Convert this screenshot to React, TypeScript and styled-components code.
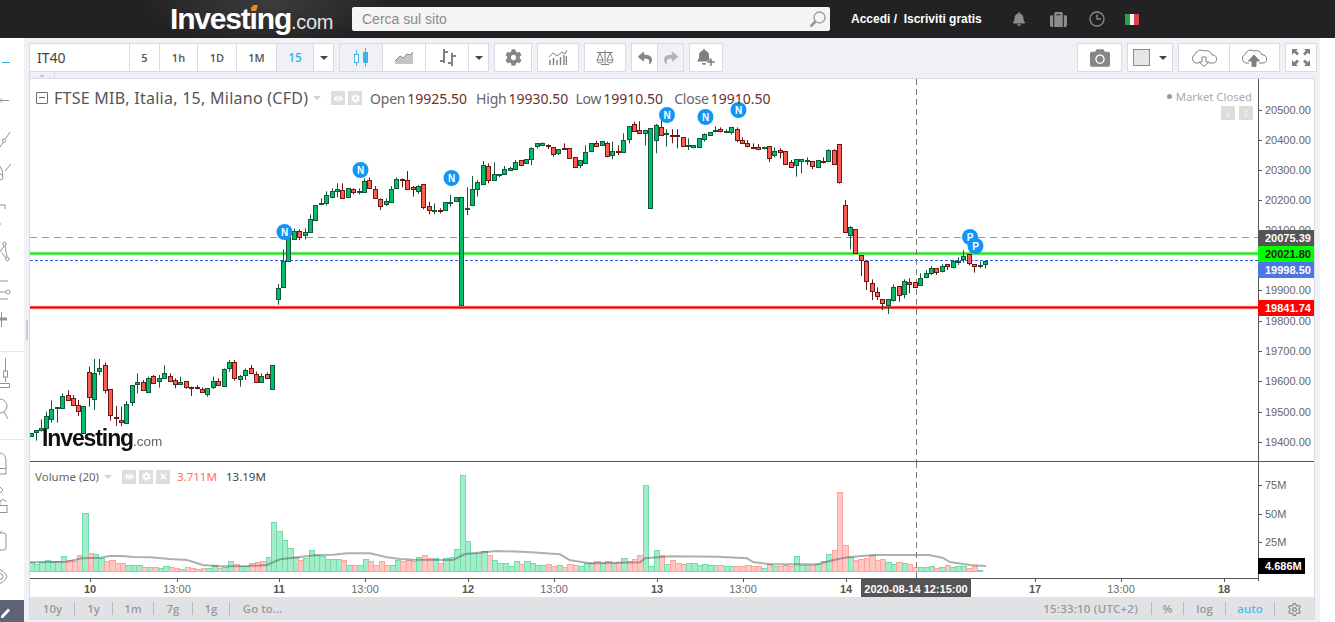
import { FC, ReactNode } from "react";
import styled, { createGlobalStyle } from "styled-components";
import {
  FaBell,
  FaCamera,
  FaCog,
  FaEye,
  FaReply,
  FaShare,
  FaSuitcase,
  FaTimes,
} from "react-icons/fa";
import { Settings } from "lucide-react";

// Candles are noted in thirds of a pixel: [x, wickTop, wickBottom, bodyTop, bodyBottom, up]
type Candle = [number, number, number, number, number, number];

const week: { ox: number; oy: number; rows: Candle[] }[] = [
  {
    ox: 0,
    oy: 340,
    rows: [
      [92, 280, 287, 280, 287, 1], [107, 271, 302, 271, 277, 1], [122, 238, 275, 265, 271, 1], [137, 215, 265, 229, 263, 1],
      [154, 181, 248, 208, 236, 1], [170, 202, 248, 202, 205, 1], [187, 160, 203, 169, 203, 1], [203, 151, 182, 166, 179, 0],
      [218, 165, 194, 175, 194, 0], [235, 180, 228, 196, 214, 0], [250, 199, 278, 199, 278, 1], [268, 80, 200, 97, 172, 0],
      [283, 57, 210, 100, 176, 1], [298, 57, 105, 85, 92, 1], [316, 67, 160, 76, 151, 0], [331, 148, 242, 148, 226, 0],
      [349, 198, 258, 231, 233, 0], [364, 200, 258, 241, 245, 0], [379, 183, 248, 193, 248, 1], [397, 136, 198, 136, 185, 1],
      [412, 100, 160, 127, 131, 1], [430, 120, 152, 127, 151, 0], [445, 110, 155, 115, 155, 1], [460, 105, 130, 109, 128, 0],
      [478, 105, 143, 115, 124, 1], [493, 76, 113, 100, 113, 1], [511, 100, 124, 109, 122, 0], [526, 115, 145, 121, 133, 0],
      [541, 110, 133, 127, 133, 1], [559, 124, 146, 124, 142, 0], [574, 140, 168, 140, 142, 0], [592, 135, 148, 142, 145, 0],
      [607, 142, 157, 148, 157, 0], [622, 145, 170, 145, 161, 1], [640, 110, 147, 124, 142, 1], [655, 115, 138, 124, 136, 0],
      [673, 85, 139, 88, 139, 1], [688, 60, 95, 67, 85, 1], [703, 60, 122, 67, 115, 0], [721, 105, 140, 109, 118, 1],
      [736, 85, 120, 91, 106, 1], [754, 75, 100, 85, 100, 0], [769, 95, 127, 103, 127, 0], [784, 100, 127, 109, 127, 1],
      [802, 97, 115, 103, 115, 0], [817, 76, 148, 76, 148, 1],
    ],
  },
  {
    ox: 260,
    oy: 100,
    rows: [
      [55, 552, 614, 565, 598, 1], [70, 448, 562, 484, 562, 1], [85, 412, 482, 412, 482, 1], [103, 385, 420, 394, 418, 1],
      [118, 388, 420, 394, 412, 0], [136, 385, 418, 397, 406, 1], [151, 343, 397, 358, 397, 1], [166, 316, 361, 316, 361, 1],
      [184, 295, 316, 310, 313, 1], [199, 274, 316, 286, 310, 1], [217, 265, 295, 274, 292, 1], [232, 250, 292, 268, 274, 1],
      [247, 250, 295, 271, 295, 0], [265, 265, 292, 265, 292, 1], [280, 265, 283, 268, 277, 0], [298, 265, 283, 274, 277, 1],
      [313, 235, 277, 244, 277, 1], [328, 232, 265, 241, 265, 0], [346, 258, 295, 268, 295, 0], [361, 295, 330, 298, 319, 0],
      [379, 295, 318, 304, 313, 1], [394, 258, 307, 268, 307, 1], [409, 232, 265, 238, 265, 1], [427, 235, 262, 238, 241, 0],
      [442, 213, 268, 241, 268, 0], [460, 258, 290, 262, 268, 0], [475, 255, 282, 259, 274, 1], [490, 253, 328, 253, 322, 0],
      [508, 305, 343, 319, 331, 0], [523, 310, 343, 331, 334, 1], [541, 325, 340, 331, 333, 0], [556, 307, 331, 307, 331, 1],
      [571, 285, 320, 307, 310, 1], [589, 292, 304, 292, 304, 1], [604, 292, 616, 292, 616, 1], [622, 262, 345, 325, 328, 1],
      [637, 228, 316, 268, 316, 1], [652, 240, 290, 247, 268, 1], [670, 183, 256, 196, 253, 1], [685, 190, 250, 199, 241, 0],
      [703, 187, 241, 223, 241, 1], [718, 222, 232, 223, 226, 1], [733, 198, 223, 208, 223, 1], [751, 200, 212, 205, 211, 1],
      [766, 180, 210, 187, 208, 1], [784, 181, 196, 181, 196, 0], [799, 178, 192, 178, 190, 1], [814, 142, 195, 145, 178, 1],
      [832, 130, 145, 130, 139, 1],
    ],
  },
  {
    ox: 540,
    oy: 100,
    rows: [
      [7, 127, 136, 130, 136, 1], [25, 133, 147, 136, 139, 0], [40, 142, 170, 142, 163, 0], [55, 147, 165, 148, 160, 1],
      [73, 130, 150, 145, 148, 0], [88, 145, 175, 145, 175, 0], [106, 172, 202, 172, 202, 0], [121, 181, 205, 181, 196, 1],
      [136, 136, 190, 157, 190, 1], [154, 130, 154, 130, 154, 1], [169, 122, 139, 130, 139, 0], [187, 124, 136, 124, 136, 1],
      [202, 125, 172, 130, 169, 0], [217, 125, 178, 154, 166, 1], [235, 136, 165, 154, 157, 0], [250, 100, 157, 121, 157, 1],
      [268, 79, 130, 79, 118, 1], [283, 65, 94, 73, 94, 0], [298, 64, 100, 91, 100, 0], [316, 91, 136, 91, 100, 1],
      [331, 85, 325, 85, 325, 1], [349, 72, 160, 76, 121, 1], [364, 60, 106, 82, 106, 0], [379, 88, 140, 100, 103, 1],
      [397, 88, 130, 106, 108, 0], [412, 88, 145, 106, 107, 0], [430, 112, 139, 112, 139, 0], [445, 115, 150, 136, 139, 1],
      [460, 136, 145, 136, 142, 1], [478, 115, 142, 115, 142, 1], [493, 100, 125, 103, 118, 1], [511, 97, 108, 97, 106, 1],
      [526, 79, 97, 91, 92, 1], [541, 82, 97, 88, 94, 0], [559, 88, 100, 93, 94, 1], [574, 82, 104, 82, 97, 1],
      [592, 82, 127, 88, 121, 0], [607, 112, 130, 121, 130, 0], [622, 120, 142, 130, 139, 0], [640, 130, 148, 142, 145, 0],
      [655, 132, 150, 142, 148, 0], [673, 140, 148, 142, 144, 1], [688, 139, 186, 139, 175, 0], [703, 142, 172, 154, 166, 1],
      [721, 145, 175, 151, 157, 0], [736, 154, 193, 154, 193, 0], [754, 180, 203, 187, 202, 0], [769, 178, 230, 178, 196, 1],
      [784, 178, 220, 178, 184, 1], [802, 172, 195, 181, 184, 1], [817, 184, 207, 184, 199, 0], [835, 181, 202, 181, 202, 1],
      [850, 172, 190, 184, 187, 0], [865, 148, 184, 151, 184, 1], [883, 148, 193, 151, 193, 0], [898, 133, 251, 133, 247, 0],
    ],
  },
  {
    ox: 820,
    oy: 190,
    rows: [
      [76, 30, 127, 46, 127, 0], [91, 108, 178, 112, 136, 1], [106, 118, 190, 118, 190, 0], [124, 196, 258, 196, 211, 0],
      [139, 214, 300, 214, 274, 0], [157, 268, 330, 280, 304, 0], [172, 292, 330, 307, 319, 0], [187, 328, 360, 328, 340, 0],
      [205, 328, 372, 328, 346, 1], [220, 283, 335, 292, 331, 1], [238, 289, 335, 289, 316, 0], [253, 268, 325, 274, 313, 1],
      [268, 265, 310, 277, 283, 0], [286, 277, 292, 277, 292, 0], [301, 250, 288, 265, 286, 1], [319, 240, 265, 250, 262, 1],
      [334, 228, 255, 235, 250, 1], [349, 235, 255, 235, 247, 0], [367, 222, 247, 229, 244, 1], [382, 222, 240, 223, 229, 0],
      [400, 210, 235, 214, 232, 1], [415, 202, 225, 212, 214, 1], [430, 181, 218, 199, 208, 1], [448, 193, 226, 193, 220, 0],
      [463, 223, 248, 223, 229, 0], [481, 214, 235, 226, 229, 1], [496, 212, 236, 212, 223, 1],
    ],
  },
];

// Volume bar tops in thirds of a pixel, negative for a falling bar
const volumeTops = [
  306, 312, 305, 300, 304, 302, 289, -300, -302, -286, 160, -280, 283, 295, -302, -300, -309, -309, 316, 316, 316, -321, 321, -321, 325, 319, -321, -323,
  327, -321, -323, -326, -323, 323, 316, -323, 321, 304, -312, 318, 318, -309, -306, -304, 291, 187, 214, 240, 265, 291, -300, 295, 270, 284, 287, 297,
  297, 297, -300, 316, -316, 316, 298, -304, -316, -304, -316, 314, 300,
  -302, -300, -302, 292, -286, -295, 295, -310, 295, 292, 268, 46, 244, 280, 280, 274, -286, 301, 310, 310, 319, 304, -313, 304, 310, 316, 316, -313,
  -319, 316, -322, -313, -316, 319, 310, 310, -304, 310, -304, 310, -307, 295, -304, -298, -286, 76, 319, 271, -286, 313, -301, -310, -313, 310, 310, 316,
  313, 316, 316, -316, 319, 319, -319, -319, -316, -319, -319, 325, -313, 319, -319, -316, -319, 289, 316, 316, -316, 313, -304, 283, -271, -97, -256,
  292, -301, -298, -295, -286, -301, -298, 307, 313, -307, 310, -313, -322, 322, 322, 319, -325, 322, -316, 322, 319, 319, -325, -319, 330,
];

const averagePath =
  "M30 562.300 L67 561.700 L82 558.300 L100 557.700 L110 556 L123 556 L133 557 L150 557.300 L170 559 L187 560 L203 565 L220 566.300 L247 566 L267 565 L280 559.300 L300 557 L317 555 L333 554.700 L347 553.300 L370 553.300 L387 557.300 L400 559 L413 559.700 L453 560 L465 554 L483 552.300 L497 551 L527 552 L560 554.300 L570 560.300 L590 563.300 L640 562.300 L645 558.300 L670 556.300 L717 556.700 L747 558.300 L753 562 L770 564.300 L817 564.300 L837 559.300 L849 557 L875 555 L929 555 L943 558 L950 562 L970 565 L986 566";

const priceTicks = [
  [110, "20500.00"], [140, "20400.00"], [170, "20300.00"], [200, "20200.00"], [230, "20100.00"], [290, "19900.00"],
  [321, "19800.00"], [351, "19700.00"], [381, "19600.00"], [412, "19500.00"], [442, "19400.00"],
] as const;

const priceBadges = [
  { y: 230, text: "20075.39", bg: "#555555", fg: "#ffffff" },
  { y: 246, text: "20021.80", bg: "#00ff00", fg: "#222222" },
  { y: 262, text: "19998.50", bg: "#4f74e3", fg: "#ffffff" },
  { y: 300, text: "19841.74", bg: "#ff0000", fg: "#ffffff" },
];

const newsMarks = [
  [360.5, 170, "N"], [284.5, 232, "N"], [451.5, 178, "N"], [667, 115, "N"], [705.5, 117, "N"], [738.5, 110, "N"], [970, 237, "P"], [975.5, 246, "P"],
] as const;

const timeTicks = [
  [90, "10", true], [177, "13:00", false], [279, "11", true], [365, "13:00", false], [468, "12", true], [554, "13:00", false],
  [657, "13", true], [743, "13:00", false], [846, "14", true], [1035, "17", true], [1121, "13:00", false], [1224, "18", true],
] as const;

const GlobalStyle = createGlobalStyle`
  html, body {
    margin: 0;
    height: 622px;
    overflow: hidden;
    background: #ffffff;
    font-family: "Liberation Sans", Arial, sans-serif;
  }
`;

const Page = styled.div`
  display: flex;
  flex-direction: column;
  width: 1335px;
  height: 622px;
  overflow: hidden;
`;

const Header = styled.header`
  display: flex;
  align-items: center;
  flex: 0 0 38px;
  padding-left: 170px;
  background: radial-gradient(ellipse 130px 40px at 270px 4px, #3c3c3c, #222222 100%);
`;

const Logo = styled.div`
  position: relative;
  flex: 0 0 182px;
  display: flex;
  align-items: baseline;
  height: 38px;
  line-height: 38px;
  color: #ffffff;
  font-size: 30px;
  font-weight: 700;
  letter-spacing: -1.18px;
`;

const LogoSuffix = styled.span`
  font-size: 20px;
  font-weight: 400;
  letter-spacing: -0.3px;
  color: #e4e4e4;
`;

const LogoTick = styled.i`
  position: absolute;
  left: 82px;
  top: 5px;
  width: 5px;
  height: 6px;
  background: #f08a1c;
  transform: skewX(-16deg);
`;

const Search = styled.div`
  display: flex;
  align-items: center;
  flex: 0 0 478px;
  height: 24px;
  box-sizing: border-box;
  padding: 0 4px 0 10px;
  border-radius: 2px;
  background: #f5f5f5;
`;

const SearchInput = styled.input`
  flex: 1;
  min-width: 0;
  border: 0;
  outline: 0;
  padding: 0;
  background: transparent;
  font: 14px "Liberation Sans", Arial, sans-serif;
  &::placeholder {
    color: #8a8a8a;
    opacity: 1;
  }
`;

const Login = styled.div`
  margin-left: 21px;
  flex: 0 0 161px;
  color: #ffffff;
  font-size: 12px;
  font-weight: 700;
  white-space: pre;
`;

const HeaderIcon = styled.div<{ $w: number }>`
  flex: 0 0 ${(p) => p.$w}px;
  display: flex;
  align-items: center;
  color: #8c8c8c;
`;

const Flag = styled.div`
  display: flex;
  width: 14px;
  height: 11px;
`;

const FlagStripe = styled.i<{ $c: string }>`
  flex: 1;
  background: ${(p) => p.$c};
`;

const Body = styled.div`
  flex: 1;
  display: flex;
  min-height: 0;
`;

const Sidebar = styled.aside`
  flex: 0 0 24px;
  display: flex;
  flex-direction: column;
  overflow: hidden;
  background: #ffffff;
`;

const ToolSection = styled.div<{ $top: number; $last?: boolean }>`
  padding: ${(p) => p.$top}px 0 ${(p) => (p.$last ? 0 : 8)}px;
  border-bottom: ${(p) => (p.$last ? "0" : "1px solid #dfe9f0")};
`;

const ToolIcon = styled.svg`
  display: block;
  width: 24px;
  height: 37.5px;
  overflow: hidden;
  fill: none;
  stroke: #8796a4;
  stroke-width: 1;
`;

const PencilButton = styled.div`
  margin-top: auto;
  height: 22px;
  background: #5d6274;
`;

const Main = styled.main`
  position: relative;
  flex: 0 0 1296px;
  display: flex;
  flex-direction: column;
  box-sizing: border-box;
  padding: 5px 5px 0;
  background: #eff1f6;
`;

const Splitter = styled.i`
  position: absolute;
  left: 2px;
  top: 282px;
  width: 2px;
  height: 20px;
  border-radius: 2px;
  background: #c9ccd3;
`;

const Toolbar = styled.div`
  display: flex;
  flex: 0 0 29px;
  gap: 5px;
  margin-right: -2px;
`;

const Group = styled.div<{ $push?: boolean }>`
  display: flex;
  box-sizing: border-box;
  border: 1px solid #d8dbe0;
  background: #ffffff;
  margin-left: ${(p) => (p.$push ? "auto" : "0")};
`;

const SymbolName = styled.div`
  width: 99px;
  padding-left: 7px;
  box-sizing: border-box;
  line-height: 27px;
  font-size: 14px;
  color: #444444;
  font-family: "Noto Sans", sans-serif;
`;

const ToolButton = styled.div<{ $w: number; $on?: boolean; $tone?: string }>`
  flex: 0 0 ${(p) => p.$w}px;
  display: flex;
  align-items: center;
  justify-content: center;
  gap: 9px;
  box-sizing: border-box;
  border-left: 1px solid #d8dbe0;
  background: ${(p) => (p.$on ? "#f0f1f5" : "#ffffff")};
  color: ${(p) => p.$tone ?? "#868686"};
  font-size: 11px;
  font-weight: 700;
  &:first-child {
    border-left: 0;
  }
`;

const IntervalLabel = styled.span<{ $on?: boolean }>`
  color: ${(p) => (p.$on ? "#3fb3e6" : "#555555")};
  font-family: "Open Sans", sans-serif;
  font-size: ${(p) => (p.$on ? 12 : 11)}px;
  font-weight: 600;
`;

const Caret = styled.i`
  width: 0;
  height: 0;
  border-left: 4px solid transparent;
  border-right: 4px solid transparent;
  border-top: 4px solid #444444;
`;

const ColorSwatch = styled.i`
  width: 17px;
  height: 17px;
  box-sizing: border-box;
  border: 1px solid #8a8a8a;
  background: #e6e6e6;
`;

const HideStrip = styled.div`
  flex: 0 0 6px;
  display: flex;
`;

const HideTab = styled.div`
  width: 26px;
  box-sizing: border-box;
  border-right: 1px solid #d8dbe0;
  border-left: 1px solid #d8dbe0;
  display: flex;
  justify-content: center;
  align-items: center;
  &::after {
    content: "";
    border-left: 3px solid transparent;
    border-right: 3px solid transparent;
    border-bottom: 3px solid #c0c3c8;
  }
`;

const Frame = styled.div`
  display: flex;
  flex-direction: column;
  width: 1286px;
  height: 542px;
  box-sizing: border-box;
  border: 1px solid #d8dbe0;
  background: #ffffff;
`;

const Pane = styled.section<{ $h: number; $rule?: boolean }>`
  position: relative;
  flex: 0 0 ${(p) => p.$h}px;
  box-sizing: border-box;
  height: ${(p) => p.$h}px;
  border-top: ${(p) => (p.$rule ? "1px solid #555555" : "0")};
`;

const Canvas = styled.svg`
  display: block;
  width: 100%;
  height: 100%;
`;

const PriceText = styled.text`
  font: 11px "Liberation Sans", Arial, sans-serif;
  fill: #666666;
`;

const BadgeText = styled.text`
  font: 700 11px "Liberation Sans", Arial, sans-serif;
`;

const MarkText = styled.text`
  font: 700 10px "Liberation Sans", Arial, sans-serif;
  fill: #ffffff;
  text-anchor: middle;
`;

const TimeText = styled.text<{ $day?: boolean }>`
  font: ${(p) => (p.$day ? 700 : 400)} 11px "Liberation Sans", Arial, sans-serif;
  fill: ${(p) => (p.$day ? "#555555" : "#6c6c6c")};
  text-anchor: middle;
`;

const Legend = styled.div`
  position: absolute;
  left: 6px;
  top: 8px;
  display: flex;
  align-items: center;
  font-family: "Noto Sans", sans-serif;
  white-space: nowrap;
`;

const Collapse = styled.i`
  position: relative;
  width: 10px;
  height: 10px;
  border: 1px solid #6b6b6b;
  border-radius: 1px;
  margin-right: 6px;
  &::after {
    content: "";
    position: absolute;
    left: 2px;
    right: 2px;
    top: 4px;
    height: 1px;
    background: #6b6b6b;
  }
`;

const LegendTitle = styled.span`
  width: 254px;
  font-size: 16px;
  letter-spacing: 0.26px;
  color: #555555;
`;

const SoftCaret = styled.i`
  width: 0;
  height: 0;
  margin-left: 5px;
  border-left: 4px solid transparent;
  border-right: 4px solid transparent;
  border-top: 4px solid #d0d0d0;
`;

const PaneButton = styled.span<{ $gap?: number }>`
  display: flex;
  align-items: center;
  justify-content: center;
  width: 14px;
  height: 14px;
  margin-left: ${(p) => p.$gap ?? 3}px;
  background: #dddddd;
  color: #ffffff;
  font-size: 9px;
`;

const QuoteLabel = styled.span<{ $gap: number }>`
  margin-left: ${(p) => p.$gap}px;
  font-size: 14px;
  letter-spacing: -0.2px;
  color: #666666;
`;

const QuoteValue = styled.span`
  margin-left: 2px;
  font-size: 14px;
  color: #6d2f2f;
`;

const MarketState = styled.div`
  position: absolute;
  right: 62px;
  top: 10px;
  display: flex;
  align-items: center;
  gap: 4px;
  font-family: "Noto Sans", sans-serif;
  font-size: 11.3px;
  color: #aaaaaa;
`;

const StateDot = styled.i`
  width: 5px;
  height: 5px;
  border-radius: 50%;
  background: #999999;
`;

const ScaleButtons = styled.div`
  position: absolute;
  right: 61px;
  top: 27px;
  display: flex;
  gap: 4px;
`;

const ScaleButton = styled.span`
  width: 14px;
  height: 14px;
  background: #dddddd;
  color: #ffffff;
  font-size: 11px;
  line-height: 13px;
  font-weight: 700;
  text-align: center;
`;

const Watermark = styled.div`
  position: absolute;
  left: 12px;
  top: 344px;
  display: flex;
  align-items: baseline;
  font-size: 23px;
  line-height: 30px;
  font-weight: 700;
  letter-spacing: -1.1px;
  color: #111111;
  filter: blur(0.4px);
`;

const WatermarkSuffix = styled.span`
  font-size: 13.5px;
  font-weight: 400;
  letter-spacing: 0;
  color: #666666;
`;

const VolumeLegend = styled.div`
  position: absolute;
  left: 5px;
  top: 7px;
  display: flex;
  align-items: center;
  font-family: "Noto Sans", sans-serif;
  font-size: 11.5px;
  color: #666666;
  white-space: nowrap;
`;

const VolumeValue = styled.span<{ $c: string; $w: number; $gap?: number }>`
  flex: 0 0 ${(p) => p.$w}px;
  margin-left: ${(p) => p.$gap ?? 0}px;
  color: ${(p) => p.$c};
`;

const BottomBar = styled.footer`
  flex: 0 0 22px;
  display: flex;
  align-items: center;
  padding-left: 1px;
  background: #e1e2e5;
  font-family: "Open Sans", sans-serif;
  font-size: 11.5px;
  font-weight: 600;
  color: #9a9a9a;
`;

const BarItem = styled.div<{ $w: number; $c?: string; $end?: boolean }>`
  flex: 0 0 ${(p) => p.$w}px;
  box-sizing: border-box;
  height: 13px;
  line-height: 13px;
  text-align: center;
  color: ${(p) => p.$c ?? "#9a9a9a"};
  border-right: ${(p) => (p.$end ? "0" : "1px solid #b9babd")};
`;

const ClockItem = styled(BarItem)`
  padding-right: 13px;
  text-align: right;
  white-space: nowrap;
  direction: rtl;
  unicode-bidi: plaintext;
  letter-spacing: 0.2px;
`;

const BarSpacer = styled.div`
  flex: 1;
`;

const CandleMark: FC<{ c: Candle; ox: number; oy: number }> = ({ c, ox, oy }) => {
  const [zx, wickTop, wickBottom, bodyTop, bodyBottom, up] = c;
  const x = Math.round(ox + zx / 3) + 0.5;
  const top = Math.round(oy + bodyTop / 3) + 0.5;
  const bottom = Math.max(Math.round(oy + bodyBottom / 3) + 0.5, top + 1);
  const edge = up ? "#14573b" : "#6e1813";
  return (
    <g stroke={edge} strokeWidth={1}>
      <line x1={x} x2={x} y1={oy + wickTop / 3} y2={oy + wickBottom / 3} />
      <rect x={x - 2} y={top} width={4} height={bottom - top} fill={up ? "#00bd6b" : "#fc5b50"} />
    </g>
  );
};

const Crosshair: FC<{ y1: number; y2: number }> = ({ y1, y2 }) => (
  <line x1={916.5} x2={916.5} y1={y1} y2={y2} stroke="#777777" strokeDasharray="6 4" />
);

const PriceChart = () => (
  <Canvas viewBox="30 79 1284 382">
    <line x1={30} x2={1258} y1={237.5} y2={237.5} stroke="#999999" strokeDasharray="7 5" />
    <line x1={30} x2={1258} y1={253.5} y2={253.5} stroke="#9df59d" strokeWidth={3.4} />
    <line x1={30} x2={1258} y1={253.5} y2={253.5} stroke="#1fe61f" strokeWidth={1.8} />
    <line x1={30} x2={1258} y1={260.5} y2={260.5} stroke="#2b5ce6" strokeDasharray="3 2" />
    <line x1={30} x2={1258} y1={307.5} y2={307.5} stroke="#ffa0a0" strokeWidth={3.4} />
    <line x1={30} x2={1258} y1={307.5} y2={307.5} stroke="#f20000" strokeWidth={1.8} />
    <Crosshair y1={79} y2={461} />
    {week.map((part) =>
      part.rows.map((c) => <CandleMark key={`${part.ox}-${c[0]}`} c={c} ox={part.ox} oy={part.oy} />),
    )}
    {newsMarks.map(([x, y, letter]) => (
      <g key={`${x}-${y}`}>
        <circle cx={x} cy={y} r={8} fill="#1296f3" />
        <MarkText x={x} y={y + 3.5}>
          {letter}
        </MarkText>
      </g>
    ))}
    <line x1={1258.5} x2={1258.5} y1={79} y2={461} stroke="#555555" />
    {priceTicks.map(([y, label]) => (
      <g key={label}>
        <line x1={1258} x2={1262} y1={y + 0.5} y2={y + 0.5} stroke="#555555" />
        <PriceText x={1265} y={y + 4}>
          {label}
        </PriceText>
      </g>
    ))}
    {priceBadges.map((b) => (
      <g key={b.text}>
        <rect x={1258} y={b.y} width={57} height={16} fill={b.bg} />
        <BadgeText x={1265} y={b.y + 12} fill={b.fg}>
          {b.text}
        </BadgeText>
      </g>
    ))}
  </Canvas>
);

const VolumeChart = () => {
  const step = 5.39;
  return (
    <Canvas viewBox="30 462 1284 116">
      {volumeTops.map((t, i) => {
        const left = Math.round(28.4 + i * step);
        const next = Math.round(28.4 + (i + 1) * step);
        const top = 460 + Math.abs(t) / 3;
        return (
          <rect
            key={i}
            x={left + 0.5}
            y={Math.round(top) + 0.5}
            width={next - left}
            height={571 - Math.round(top)}
            fill={t > 0 ? "#a4edcb" : "#ffc8c4"}
            stroke={t > 0 ? "#6fdcab" : "#ffa39c"}
          />
        );
      })}
      <path d={averagePath} fill="none" stroke="#4e4e4e" strokeOpacity={0.45} strokeWidth={2} />
      <Crosshair y1={462} y2={578} />
      <line x1={1258.5} x2={1258.5} y1={462} y2={578} stroke="#555555" />
      {[[485, "75M"], [514, "50M"], [542, "25M"]].map(([y, label]) => (
        <g key={label}>
          <line x1={1258} x2={1262} y1={Number(y) + 0.5} y2={Number(y) + 0.5} stroke="#555555" />
          <PriceText x={1265} y={Number(y) + 4}>
            {label}
          </PriceText>
        </g>
      ))}
      <rect x={1258} y={558} width={47} height={16} fill="#000000" />
      <BadgeText x={1265} y={570} fill="#ffffff">
        4.686M
      </BadgeText>
    </Canvas>
  );
};

const TimeAxis = () => (
  <Canvas viewBox="30 578 1284 19">
    <line x1={30} x2={1258} y1={578.5} y2={578.5} stroke="#555555" />
    <line x1={1258.5} x2={1258.5} y1={578} y2={581} stroke="#555555" />
    {timeTicks.map(([x, label, day]) => (
      <g key={x}>
        <line x1={x + 0.5} x2={x + 0.5} y1={578} y2={582} stroke="#555555" />
        <TimeText x={x} y={593} $day={day}>
          {label}
        </TimeText>
      </g>
    ))}
    <rect x={861} y={578} width={110} height={19} fill="#555555" />
    <BadgeText x={916} y={593} fill="#ffffff" textAnchor="middle">
      2020-08-14 12:15:00
    </BadgeText>
  </Canvas>
);

const Tool: FC<{ children: ReactNode }> = ({ children }) => (
  <ToolIcon viewBox="0 0 24 37.5">{children}</ToolIcon>
);

const LeftTools = () => (
  <Sidebar>
    <ToolSection $top={5}>
      <Tool>
        <path d="M2 19.5H10" stroke="#3fb3e6" />
      </Tool>
      <Tool>
        <path d="M0 19.5H9M2 17.5L0 19.5L2 21.5" />
      </Tool>
      <Tool>
        <path d="M10 14L5.5 21M3 24.5L0 29" />
        <circle cx={4} cy={22.5} r={1.6} />
      </Tool>
      <Tool>
        <path d="M11 8L5 15M-1 9Q3 14 3 19" />
        <circle cx={0} cy={21} r={3} />
      </Tool>
      <Tool>
        <path d="M0 12H5V16M0 31H1" />
      </Tool>
      <Tool>
        <path d="M4 15L0 21M5 15L7 26M2 22L6 27" />
        <circle cx={4.5} cy={13} r={1.7} />
        <circle cx={7.5} cy={28} r={1.7} />
      </Tool>
      <Tool>
        <path d="M0 13H8M0 24H6M0 31H8" />
        <circle cx={8} cy={24} r={2} />
      </Tool>
      <Tool>
        <path d="M0 13H7" strokeWidth={3} />
        <path d="M1.5 6V21" />
      </Tool>
    </ToolSection>
    <ToolSection $top={4}>
      <Tool>
        <path d="M5.5 2V15M5.5 21V26M0 27.5H9.5V31.5H0" />
        <rect x={3.5} y={15} width={4} height={6} />
      </Tool>
      <Tool>
        <circle cx={0} cy={12} r={7} />
        <path d="M4 18L8 25" />
      </Tool>
    </ToolSection>
    <ToolSection $top={5} $last>
      <Tool>
        <path d="M0 8Q6 9 6 16V29H0M0 23.5H6" />
      </Tool>
      <Tool>
        <path d="M0 4L3 7L0 10M0 22V18Q3 15 6 18V19" />
        <rect x={-1} y={22.5} width={8} height={7} />
      </Tool>
      <Tool>
        <rect x={-2} y={13} width={8} height={17} rx={2} />
        <path d="M0 13L2 10.5" />
      </Tool>
      <Tool>
        <path d="M-2 11Q4 12 7 18.5Q4 25 -2 26" />
        <circle cx={0} cy={18.5} r={3} />
      </Tool>
    </ToolSection>
    <PencilButton>
      <svg width={24} height={22} viewBox="0 0 24 22">
        <path d="M1 16L8 8.5L10 10.5L3 18L1 18Z" fill="#ffffff" />
      </svg>
    </PencilButton>
  </Sidebar>
);

const TopToolbar = () => (
  <Toolbar>
    <Group>
      <SymbolName>IT40</SymbolName>
      {[["5", 30], ["1h", 38], ["1D", 39], ["1M", 40]].map(([label, w]) => (
        <ToolButton key={label} $w={Number(w)}>
          <IntervalLabel>{label}</IntervalLabel>
        </ToolButton>
      ))}
      <ToolButton $w={37} $on>
        <IntervalLabel $on>15</IntervalLabel>
      </ToolButton>
      <ToolButton $w={20}>
        <Caret />
      </ToolButton>
    </Group>
    <Group>
      <ToolButton $w={42} $on>
        <svg width={16} height={20} viewBox="0 0 16 20" fill="none" stroke="#3fb3e6">
          <path d="M3.5 2V18M12.5 0V19" />
          <rect x={1.5} y={6.5} width={4} height={8} fill="#ffffff" />
          <rect x={10.5} y={4.5} width={4} height={10} fill="#3fb3e6" />
        </svg>
      </ToolButton>
      <ToolButton $w={43}>
        <svg width={18} height={12} viewBox="0 0 18 12">
          <path d="M0 11V9L5 4L8 6L12 2L15 3L18 0V12H0Z" fill="#c4c4c4" />
          <path d="M0 9L5 4L8 6L12 2L15 3L18 0" fill="none" stroke="#8a8a8a" />
        </svg>
      </ToolButton>
      <ToolButton $w={43}>
        <svg width={17} height={19} viewBox="0 0 17 19" fill="none" stroke="#808080" strokeWidth={2}>
          <path d="M5 1V15M5 4H9M5 13H1M13 5V18M13 8H17M13 15H9" />
        </svg>
      </ToolButton>
      <ToolButton $w={20}>
        <Caret />
      </ToolButton>
    </Group>
    <Group>
      <ToolButton $w={36}>
        <FaCog size={17} />
      </ToolButton>
    </Group>
    <Group>
      <ToolButton $w={40}>
        <svg width={18} height={15} viewBox="0 0 18 15" fill="none" stroke="#808080">
          <path d="M1 15V10M4.5 15V8M8 15V10M11.5 15V7M15 15V5M17.500 15V6" strokeWidth={1.4} />
          <path d="M0 7L4 3L8 6L13 2L16 4L18 0" />
        </svg>
      </ToolButton>
    </Group>
    <Group>
      <ToolButton $w={40}>
        <svg width={18} height={15} viewBox="0 0 18 15" fill="none" stroke="#808080">
          <path d="M1 2.500H17M9 0V14M5 14.500H13" />
          <path d="M4 3L1 10H7ZM14 3L11 10H17Z" />
          <path d="M1 10A3 3 0 0 0 7 10M11 10A3 3 0 0 0 17 10" />
        </svg>
      </ToolButton>
    </Group>
    <Group>
      <ToolButton $w={25}>
        <FaReply size={14} />
      </ToolButton>
      <ToolButton $w={26} $on $tone="#b4b4b4">
        <FaShare size={14} />
      </ToolButton>
    </Group>
    <Group>
      <ToolButton $w={32}>
        <svg width={18} height={17} viewBox="0 0 18 17" fill="#808080">
          <path d="M7 0A1 1 0 0 1 8 1.500C11 2 12 4 12 7V9L14 12.500H0L2 9V7C2 4 3 2 6 1.500A1 1 0 0 1 7 0ZM5 14H9A2 2 0 0 1 5 14Z" />
          <path d="M13 9.500H15V12H18V14H15V17H13V14H10V12H13Z" stroke="#ffffff" strokeWidth={0.4} />
        </svg>
      </ToolButton>
    </Group>
    <Group $push>
      <ToolButton $w={43}>
        <FaCamera size={20} />
      </ToolButton>
    </Group>
    <Group>
      <ToolButton $w={44}>
        <ColorSwatch />
        <Caret />
      </ToolButton>
    </Group>
    <Group>
      <ToolButton $w={50}>
        <svg width={27} height={19} viewBox="0 0 27 19" fill="none" stroke="#808080">
          <path d="M8 15H5A4.500 4.500 0 0 1 4 6.500A6 6 0 0 1 13 3A6 6 0 0 1 21 7A4 4 0 0 1 22 15H18" />
          <path d="M11 9H15V14H18L13 18.500L8 14H11Z" fill="#ffffff" />
        </svg>
      </ToolButton>
      <ToolButton $w={50}>
        <svg width={27} height={19} viewBox="0 0 27 19" fill="none" stroke="#808080">
          <path d="M8 15H5A4.500 4.500 0 0 1 4 6.500A6 6 0 0 1 13 3A6 6 0 0 1 21 7A4 4 0 0 1 22 15H18" />
          <path d="M11 18.500H15V13H18.500L13 7L7.500 13H11Z" fill="#808080" />
        </svg>
      </ToolButton>
    </Group>
    <Group>
      <ToolButton $w={30}>
        <svg width={18} height={17} viewBox="0 0 18 17" fill="#808080">
          <path d="M0 0H6L4.200 1.800L7 4.600L5 6.600L2.200 3.800L0 6ZM18 0V6L15.800 3.800L13 6.600L11 4.600L13.800 1.800L12 0ZM0 17V11L2.200 13.200L5 10.400L7 12.400L4.200 15.200L6 17ZM18 17H12L13.800 15.200L11 12.400L13 10.400L15.800 13.200L18 11Z" />
        </svg>
      </ToolButton>
    </Group>
  </Toolbar>
);

const App = () => (
  <Page>
    <GlobalStyle />
    <Header>
      <Logo>
        Investing<LogoSuffix>.com</LogoSuffix>
        <LogoTick />
      </Logo>
      <Search>
        <SearchInput placeholder="Cerca sul sito" readOnly />
        <svg width={17} height={17} viewBox="0 0 17 17" fill="none" stroke="#9a9a9a">
          <circle cx={10.500} cy={6.500} r={5.500} strokeWidth={1.3} />
          <path d="M6.500 10.500L1.500 15.500" strokeWidth={2.600} />
        </svg>
      </Search>
      <Login>Accedi /  Iscriviti gratis</Login>
      <HeaderIcon $w={38}>
        <FaBell size={14} />
      </HeaderIcon>
      <HeaderIcon $w={39}>
        <FaSuitcase size={17} />
      </HeaderIcon>
      <HeaderIcon $w={36}>
        <svg width={16} height={16} viewBox="0 0 16 16" fill="none" stroke="#8c8c8c" strokeWidth={1.300}>
          <circle cx={8} cy={8} r={7} />
          <path d="M8 3.500V8H12" />
        </svg>
      </HeaderIcon>
      <Flag>
        <FlagStripe $c="#2fa04a" />
        <FlagStripe $c="#f2f2f2" />
        <FlagStripe $c="#d9434e" />
      </Flag>
    </Header>
    <Body>
      <LeftTools />
      <Main>
        <Splitter />
        <TopToolbar />
        <HideStrip>
          <HideTab />
        </HideStrip>
        <Frame>
          <Pane $h={382}>
            <PriceChart />
            <Legend>
              <Collapse />
              <LegendTitle>FTSE MIB, Italia, 15, Milano (CFD)</LegendTitle>
              <SoftCaret />
              <PaneButton $gap={10}>
                <FaEye />
              </PaneButton>
              <PaneButton>
                <FaCog />
              </PaneButton>
              <QuoteLabel $gap={8}>Open</QuoteLabel>
              <QuoteValue>19925.50</QuoteValue>
              <QuoteLabel $gap={9}>High</QuoteLabel>
              <QuoteValue>19930.50</QuoteValue>
              <QuoteLabel $gap={7}>Low</QuoteLabel>
              <QuoteValue>19910.50</QuoteValue>
              <QuoteLabel $gap={11}>Close</QuoteLabel>
              <QuoteValue>19910.50</QuoteValue>
            </Legend>
            <MarketState>
              <StateDot />
              Market Closed
            </MarketState>
            <ScaleButtons>
              <ScaleButton>↓</ScaleButton>
              <ScaleButton>↕</ScaleButton>
            </ScaleButtons>
            <Watermark>
              Investing<WatermarkSuffix>.com</WatermarkSuffix>
            </Watermark>
          </Pane>
          <Pane $h={117} $rule>
            <VolumeChart />
            <VolumeLegend>
              Volume (20)
              <SoftCaret />
              <PaneButton $gap={10}>
                <FaEye />
              </PaneButton>
              <PaneButton>
                <FaCog />
              </PaneButton>
              <PaneButton>
                <FaTimes />
              </PaneButton>
              <VolumeValue $c="#ff6b66" $w={49} $gap={7}>
                3.711M
              </VolumeValue>
              <VolumeValue $c="#444444" $w={50}>
                13.19M
              </VolumeValue>
            </VolumeLegend>
          </Pane>
          <Pane $h={19}>
            <TimeAxis />
          </Pane>
          <BottomBar>
            <BarItem $w={44}>10y</BarItem>
            <BarItem $w={38}>1y</BarItem>
            <BarItem $w={41}>1m</BarItem>
            <BarItem $w={39}>7g</BarItem>
            <BarItem $w={37}>1g</BarItem>
            <BarItem $w={65} $end>
              Go to...
            </BarItem>
            <BarSpacer />
            <ClockItem $w={103}>15:33:10 (UTC+2)</ClockItem>
            <BarItem $w={32}>%</BarItem>
            <BarItem $w={42}>log</BarItem>
            <BarItem $w={49} $c="#4fbbe8">
              auto
            </BarItem>
            <BarItem $w={39} $end>
              <Settings size={15} color="#8a8a8a" />
            </BarItem>
          </BottomBar>
        </Frame>
      </Main>
    </Body>
  </Page>
);

export default App;
